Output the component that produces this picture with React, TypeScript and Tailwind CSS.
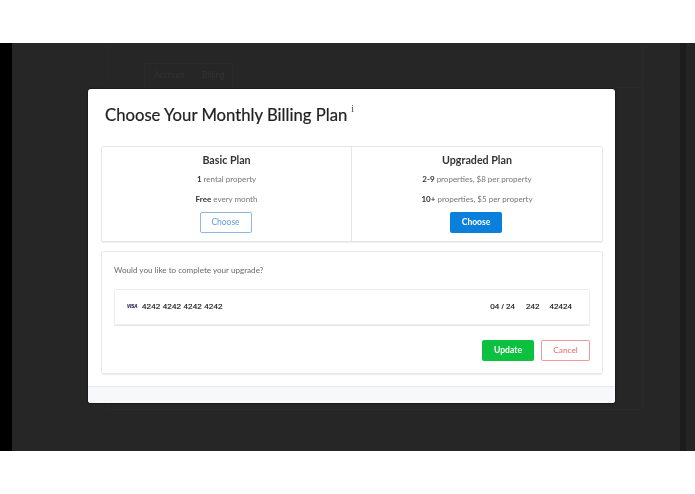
// Billing settings page with the plan dialog open
const lato = "font-['Lato','Open_Sans',sans-serif]";

function PlanColumn({
  title,
  lines,
  primary,
}: {
  title: string;
  lines: [string, string][];
  primary?: boolean;
}) {
  return (
    <div className={`flex flex-col items-center pt-[5px] ${primary ? "flex-1" : "w-[249px]"}`}>
      <div className="text-[10.7px] leading-[15px] font-bold text-[#333333]">{title}</div>
      <div className="mt-[6px] flex flex-col gap-[6px]">
        {lines.map(([strong, rest]) => (
          <div key={strong} className="text-center text-[8px] leading-[13.5px] text-[#757575]">
            <span className="font-bold text-[#333333]">{strong}</span> {rest}
          </div>
        ))}
      </div>
      {primary ? (
        <button className="mt-[6px] mr-[2px] h-[21px] w-[52px] rounded-[2px] bg-[#0a7fdc] text-[8.5px] font-bold text-white">
          Choose
        </button>
      ) : (
        <button className="mt-[6px] mr-[2px] h-[21px] w-[52px] rounded-[2px] border border-[#8fb6e4] bg-white text-[8.5px] text-[#5f9be0]">
          Choose
        </button>
      )}
    </div>
  );
}

function BillingDialog() {
  return (
    <div className="absolute top-[46px] left-[88px] flex h-[314px] w-[527px] flex-col overflow-hidden rounded-[3px] bg-white shadow-[0_0_2px_#000]">
      <div className="flex flex-1 flex-col pr-[12px] pl-[13px]">
        <div className="flex h-[57px] items-start pt-[16px] pl-[4px]">
          <h1 className="text-[16.7px] leading-[21px] font-normal text-[#222222] [-webkit-text-stroke:0.2px_#222222]">Choose Your Monthly Billing Plan</h1>
          <span className="mt-[-2px] ml-[4px] font-['Liberation_Serif',serif] text-[10px] leading-[12px] text-[#444444]">i</span>
        </div>

        <div className="flex h-[96px] rounded-[2px] border border-[#e6e6e6] shadow-[0_1px_1px_#eeeeee]">
          <PlanColumn
            title="Basic Plan"
            lines={[
              ["1", "rental property"],
              ["Free", "every month"],
            ]}
          />
          <div className="w-px bg-[#e6e6e6]" />
          <PlanColumn
            primary
            title="Upgraded Plan"
            lines={[
              ["2-9", "properties, $8 per property"],
              ["10+", "properties, $5 per property"],
            ]}
          />
        </div>

        <div className="mt-[9px] flex h-[123px] flex-col rounded-[2px] border border-[#e9e9e9] px-[12px] shadow-[0_1px_1px_#eeeeee]">
          <div className="mt-[12px] text-[8.1px] leading-[13px] text-[#6a6a6a]">Would you like to complete your upgrade?</div>
          <div className="mt-[12px] flex h-[36px] items-center rounded-[2px] border border-[#ececec] pr-[17px] pl-[12px] font-['Liberation_Sans',sans-serif] text-[8.1px] text-[#111111] shadow-[0_1px_1px_#e5e5e5] [-webkit-text-stroke:0.15px_#111111]">
            <span className="w-[15px] text-[4.5px] font-bold text-[#2f2a7a] italic">VISA</span>
            <span className="tracking-[0.1px]">4242 4242 4242 4242</span>
            <span className="ml-auto">04 / 24</span>
            <span className="ml-[11px]">242</span>
            <span className="ml-[10px]">42424</span>
          </div>
          <div className="mt-[15px] flex justify-end gap-[7px]">
            <button className="h-[21px] w-[52px] rounded-[2px] bg-[#0cc13f] text-[8.6px] font-bold text-white">Update</button>
            <button className="h-[21px] w-[49px] rounded-[2px] border border-[#ee9a9a] bg-white text-[8.3px] text-[#e86a6a]">Cancel</button>
          </div>
        </div>
      </div>
      <div className="h-[17px] border-t border-[#e9ebef] bg-[#f7f8fa]" />
    </div>
  );
}

export default function App() {
  return (
    <div className={`flex h-[494px] w-[695px] flex-col overflow-hidden bg-white blur-[0.3px] ${lato}`}>
      <div className="h-[43px]" />
      <div className="relative flex h-[408px] bg-[#262626]">
        <div className="w-[12px] bg-black" />
        <div className="w-[95px]" />
        {/* page behind the overlay */}
        <div className="h-[367px] w-[536px] border-r border-b border-l border-[#292929]">
          <div className="mt-[20px] ml-[36px] flex h-[24px] w-[89px] items-center gap-[17px] border border-b-0 border-[#292929] pl-[9px] text-[8.5px] text-[#333333]">
            <span>Account</span>
            <span>Billing</span>
          </div>
          <div className="h-px w-full bg-[#292929]" />
        </div>
        <div className="w-[37px]" />
        <div className="w-[6px] bg-[#1c1c1c]" />
        <div className="flex-1 bg-[#242424]" />
        <BillingDialog />
      </div>
      <div className="h-[43px]" />
    </div>
  );
}
